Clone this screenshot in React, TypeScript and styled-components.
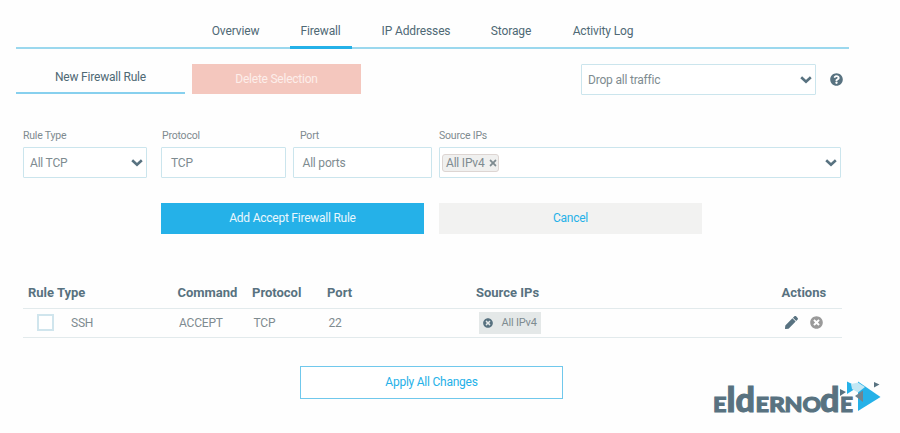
import React from "react";
import styled, { createGlobalStyle } from "styled-components";
import { FaQuestionCircle, FaPen, FaTimesCircle, FaTimes } from "react-icons/fa";

const Global = createGlobalStyle`
  * { box-sizing: border-box; }
  body { margin: 0; background: #fefefe; font-family: Roboto, sans-serif; font-size: 12px; letter-spacing: -0.2px; color: #7e8b90; }
  svg { display: block; flex: none; }
`;
const Page = styled.main`
  width: 900px; height: 433px; overflow: hidden; padding: 14px 0 0 16px;
`;
const Tabs = styled.nav`
  display: flex; width: 833px; height: 35px; padding-left: 186px;
  border-bottom: 2px solid #9bd8ee; letter-spacing: -0.13px;
`;
const Tab = styled.a<{ $w: number; $active?: boolean }>`
  width: ${p => p.$w}px; height: 35px; line-height: 34px; text-align: center; color: #4f6975;
  ${p => p.$active && "border-bottom: 3px solid #25b1e8;"}
`;
const Spacer = styled.i<{ $w: number }>`flex: none; width: ${p => p.$w}px;`;
const Toolbar = styled.div`
  display: flex; height: 31px; margin-top: 15px; align-items: flex-start;
`;
const NewRule = styled.button`
  width: 169px; height: 30px; padding: 0 0 3px; border: 0; border-bottom: 2px solid #87d0ee;
  background: none; font: 12px Roboto, sans-serif; letter-spacing: -0.2px; color: #4f6975;
`;
const Action = styled.button<{ $kind: "danger" | "primary" | "muted" | "outline"; $w: number }>`
  width: ${p => p.$w}px; height: ${p => (p.$kind === "danger" ? 30 : p.$kind === "outline" ? 33 : 31)}px;
  padding: 0 0 ${p => (p.$kind === "danger" ? 0 : 2)}px; font: 12px Roboto, sans-serif; letter-spacing: -0.24px;
  border: ${p => (p.$kind === "outline" ? "1px solid #70c8ec" : "0")};
  background: ${p => ({ danger: "#f4c7be", primary: "#25b1e8", muted: "#f2f2f1", outline: "#fff" })[p.$kind]};
  color: ${p => ({ danger: "#fdeeea", primary: "#e9f7fd", muted: "#25b1e8", outline: "#25b1e8" })[p.$kind]};
`;
const Box = styled.div<{ $w: number; $pad?: number }>`
  display: flex; align-items: center; justify-content: space-between;
  width: ${p => p.$w}px; height: 31px; padding: 0 3px 0 ${p => p.$pad ?? 6}px;
  border: 1px solid #cbe5ed; border-radius: 1px; background: #fff;
`;
const Drop = styled.div`margin-left: 220px;`;
const Help = styled.div`margin: 9px 0 0 14px; color: #587280;`;
const Form = styled.div`display: flex; margin: 32px 0 0 7px;`;
const Field = styled.label<{ $gap: number; $indent?: number }>`
  margin-right: ${p => p.$gap}px;
  > span { display: block; height: 20px; line-height: 17px; font-size: 10.5px; padding-left: ${p => p.$indent ?? 0}px; }
`;
const Chip = styled.span`
  display: flex; align-items: center; gap: 3px; height: 18px; width: 57px; padding-left: 3px;
  border: 1px solid #ddd5d2; border-radius: 3px; background: #f0f0ef;
`;
const Buttons = styled.div`display: flex; gap: 15px; margin: 25px 0 0 145px;`;
const Table = styled.div`width: 819px; margin: 43px 0 0 7px;`;
const Row = styled.div<{ $head?: boolean }>`
  display: grid; grid-template-columns: 149.5px 74.5px 75px 149px 305.5px 1fr;
  height: ${p => (p.$head ? 32 : 29)}px; align-items: center; padding: 0 0 ${p => (p.$head ? 1 : 0)}px 5px;
  border-bottom: 1px solid #e2eaec;
  ${p => p.$head && "font-weight: 700; font-size: 13px; letter-spacing: 0; color: #587280;"}
`;
const Rule = styled.span`display: flex; align-items: center; gap: 17px; padding: 0 0 1px 9px;`;
const Check = styled.span`width: 17px; height: 17px; border: 2px solid #d0e5ed; background: #fff;`;
const Cell = styled.span`padding: 0 0 1px 1.5px;`;
const Tag = styled.span`
  display: flex; align-items: center; gap: 9px; width: 62px; height: 22px; margin: 0 0 1px 2.5px; padding-left: 4px;
  background: #e4e8e8; font-size: 11px;
  svg { color: #587280; }
`;
const Icons = styled.span`
  display: flex; gap: 12px; padding: 0 0 1px 3px; color: #587280;
  svg + svg { color: #9a9a9a; }
`;
const Footer = styled.footer`display: flex; margin: 28px 0 0 284px;`;
const Brand = styled.svg`margin: 9px 0 0 145px; overflow: visible; letter-spacing: 0;`;

const Chevron = () => (
  <svg width="12" height="8" viewBox="0 0 12 8"><path d="M1.2 1.3 6 5.8 10.8 1.3" fill="none" stroke="#587280" strokeWidth="2.6" /></svg>
);

const letters: { char: string; x: number; size: number; width: number }[] = [
  { char: "E", x: 5, size: 21.5, width: 13.5 },
  { char: "l", x: 18.5, size: 33.5, width: 9 },
  { char: "d", x: 27.5, size: 33.5, width: 19.5 },
  { char: "E", x: 47.5, size: 21.5, width: 13.5 },
  { char: "R", x: 61, size: 21.5, width: 16 },
  { char: "N", x: 76.5, size: 21.5, width: 18 },
  { char: "O", x: 94.5, size: 21.5, width: 18.5 },
  { char: "d", x: 112, size: 33.5, width: 19.5 },
  { char: "E", x: 132, size: 21.5, width: 13 },
];

export default function App() {
  return (
    <Page>
      <Global />
      <Tabs>
        <Tab $w={67}>Overview</Tab><Spacer $w={20.5} />
        <Tab $w={62} $active>Firewall</Tab><Spacer $w={20.5} />
        <Tab $w={88}>IP Addresses</Tab><Spacer $w={20} />
        <Tab $w={62}>Storage</Tab><Spacer $w={20} />
        <Tab $w={82}>Activity Log</Tab>
      </Tabs>
      <Toolbar>
        <NewRule>New Firewall Rule</NewRule><Spacer $w={7} />
        <Action $kind="danger" $w={169}>Delete Selection</Action>
        <Drop><Box $w={235}>Drop all traffic<Chevron /></Box></Drop>
        <Help><FaQuestionCircle size={13} /></Help>
      </Toolbar>
      <Form>
        <Field $gap={14}><span>Rule Type</span><Box $w={124}>All TCP<Chevron /></Box></Field>
        <Field $gap={7} $indent={1}><span>Protocol</span><Box $w={125} $pad={9}>TCP</Box></Field>
        <Field $gap={7} $indent={7}><span>Port</span><Box $w={139} $pad={8.5}>All ports</Box></Field>
        <Field $gap={0}><span>Source IPs</span><Box $w={402} $pad={2}><Chip>All IPv4<FaTimes size={10} /></Chip><Chevron /></Box></Field>
      </Form>
      <Buttons>
        <Action $kind="primary" $w={263}>Add Accept Firewall Rule</Action>
        <Action $kind="muted" $w={263}>Cancel</Action>
      </Buttons>
      <Table>
        <Row $head>
          <span>Rule Type</span><span>Command</span><span>Protocol</span><span>Port</span><span>Source IPs</span><span>Actions</span>
        </Row>
        <Row>
          <Rule><Check />SSH</Rule><Cell>ACCEPT</Cell><Cell>TCP</Cell><Cell>22</Cell>
          <Tag><FaTimesCircle size={10} />All IPv4</Tag>
          <Icons><FaPen size={13} /><FaTimesCircle size={13} /></Icons>
        </Row>
      </Table>
      <Footer>
        <Action $kind="outline" $w={263}>Apply All Changes</Action>
        <Brand width="176" height="42" viewBox="0 0 176 42">
          <path d="M158 6.5 180.5 22 158 36Z" transform="translate(-8 0)" fill="#25b1e8" />
          <path d="M139 6.5 150 12 139 19Z" fill="#25b1e8" />
          <path d="M143 9 150 7.5 157 12 150 17.5 144 14Z" fill="#c2e7f4" />
          <path d="M132 14 138 17 132 21ZM166 7 171.500 9.500 166 12.500Z" fill="#587280" />
          <path d="M147 21 155 15.500V27Z" fill="#71848f" />
          <g fill="#587280" stroke="#587280" strokeWidth="1" fontFamily="Lato, sans-serif" fontWeight="900">
            {letters.map(({ char, x, size, width }, i) => (
              <text key={i} x={x} y="36.5" fontSize={size} textLength={width} lengthAdjust="spacingAndGlyphs">{char}</text>
            ))}
          </g>
        </Brand>
      </Footer>
    </Page>
  );
}
